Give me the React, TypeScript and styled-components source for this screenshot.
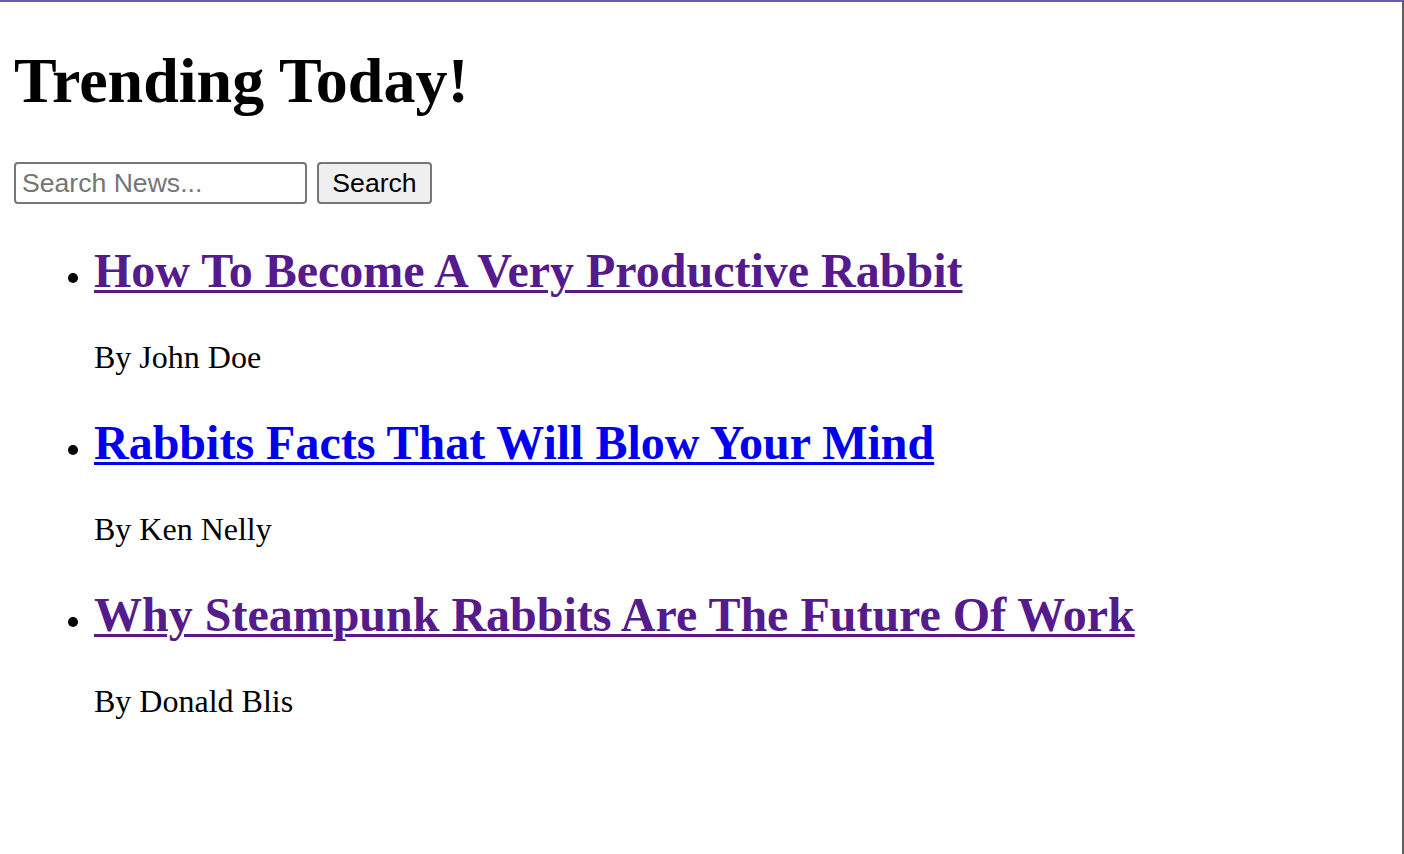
import React from "react";
import styled, { createGlobalStyle } from "styled-components";

const GlobalStyle = createGlobalStyle`
  html, body {
    margin: 0;
    padding: 0;
    background: #ffffff;
  }
  body {
    font-family: "Liberation Serif", "Times New Roman", serif;
    font-size: 32px;
    color: #000000;
  }
`;

const Page = styled.div`
  box-sizing: border-box;
  min-height: 854px;
  border-top: 2px solid #6a58b8;
  border-right: 2px solid #5f5f5f;
  padding: 0 16px 0 14px;
  overflow: hidden;
`;

const Title = styled.h1`
  font-family: "Liberation Serif", "Times New Roman", serif;
  font-size: 64px;
  font-weight: 700;
  line-height: 73px;
  margin: 42px 0 45px 0;
`;

const SearchForm = styled.form`
  display: flex;
  align-items: center;
  gap: 10px;
  margin: 0;
`;

const SearchInput = styled.input`
  box-sizing: border-box;
  width: 293px;
  height: 42px;
  padding: 0 6px;
  border: 2px solid #767676;
  border-radius: 4px;
  font-family: "Liberation Sans", Arial, sans-serif;
  font-size: 26.6px;
  color: #000;
  background: #fff;
  outline: none;
  &::placeholder {
    color: #757575;
  }
`;

const SearchButton = styled.button`
  box-sizing: border-box;
  width: 115px;
  height: 42px;
  padding: 0 12px;
  border: 2px solid #767676;
  border-radius: 4px;
  background: #efefef;
  font-family: "Liberation Sans", Arial, sans-serif;
  font-size: 26.6px;
  color: #000;
`;

const NewsList = styled.ul`
  list-style: disc;
  margin: 39px 0 0 0;
  padding-left: 80px;
`;

const NewsItem = styled.li`
  font-size: 32px;
`;

const Headline = styled.h2`
  font-family: "Liberation Serif", "Times New Roman", serif;
  font-size: 48px;
  font-weight: 700;
  line-height: 55px;
  margin: 0 0 41px 0;
`;

const HeadlineLink = styled.a<{ $visited?: boolean }>`
  color: ${(p) => (p.$visited ? "#551a8b" : "#0000ee")};
  text-decoration: underline;
  text-decoration-thickness: 3px;
  text-underline-offset: 3px;
`;

const Byline = styled.p`
  font-size: 32px;
  line-height: 37px;
  margin: 0 0 39px 0;
`;

const articles = [
  { title: "How To Become A Very Productive Rabbit", author: "John Doe", visited: true },
  { title: "Rabbits Facts That Will Blow Your Mind", author: "Ken Nelly", visited: false },
  { title: "Why Steampunk Rabbits Are The Future Of Work", author: "Donald Blis", visited: true },
];

export default function App() {
  return (
    <>
      <GlobalStyle />
      <Page>
        <Title>Trending Today!</Title>
        <SearchForm onSubmit={(e) => e.preventDefault()}>
          <SearchInput type="text" placeholder="Search News..." />
          <SearchButton type="submit">Search</SearchButton>
        </SearchForm>
        <NewsList>
          {articles.map((a) => (
            <NewsItem key={a.title}>
              <Headline>
                <HeadlineLink href="#" $visited={a.visited}>
                  {a.title}
                </HeadlineLink>
              </Headline>
              <Byline>By {a.author}</Byline>
            </NewsItem>
          ))}
        </NewsList>
      </Page>
    </>
  );
}
